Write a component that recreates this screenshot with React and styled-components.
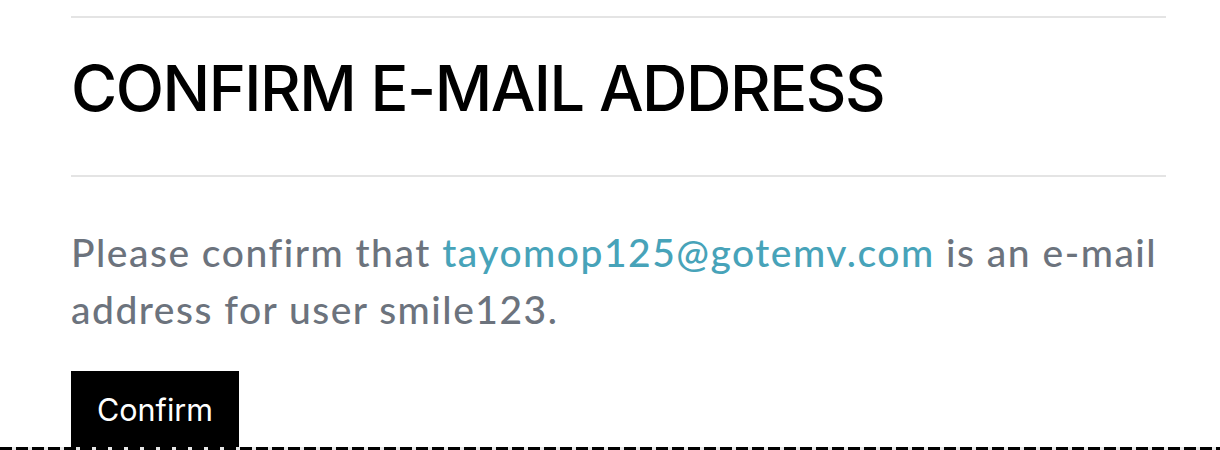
import React from 'react';
import styled, { createGlobalStyle } from 'styled-components';

const GlobalStyle = createGlobalStyle`
  html, body {
    margin: 0;
    padding: 0;
    background: #ffffff;
  }
  body {
    font-family: 'Inter', 'Liberation Sans', sans-serif;
    overflow: hidden;
  }
`;

const Page = styled.div`
  padding: 16px 54px 0 71px;
`;

const Rule = styled.hr`
  margin: 0;
  border: 0;
  height: 2px;
  background: #e4e4e4;
`;

const Title = styled.h1`
  margin: 31px 0 47px;
  font-family: 'Inter', 'Liberation Sans', sans-serif;
  font-size: 63px;
  line-height: 79px;
  font-weight: 500;
  color: #000000;
  letter-spacing: -1.5px;
`;

const Message = styled.p`
  margin: 47px 0 33px;
  font-family: 'Lato', 'Noto Sans', sans-serif;
  font-size: 39px;
  line-height: 57px;
  font-weight: 500;
  letter-spacing: 1.5px;
  color: #6c737d;
`;

const Email = styled.a`
  color: #47a3b9;
  text-decoration: none;
`;

const ConfirmButton = styled.button`
  display: block;
  border: 0;
  border-radius: 0;
  margin: 0;
  padding: 15px 26px 40px;
  background: #000000;
  color: #ffffff;
  font-family: 'Inter', 'Liberation Sans', sans-serif;
  font-size: 30.5px;
  line-height: 48px;
  cursor: pointer;
`;

const PageEdge = styled.div`
  position: fixed;
  left: 0;
  right: 0;
  top: 447px;
  height: 3px;
  background: repeating-linear-gradient(
    90deg,
    #000000 0 12px,
    #e6e6e6 12px 16px
  );
`;

export default function App() {
  return (
    <>
      <GlobalStyle />
      <Page>
        <Rule />
        <Title>CONFIRM E-MAIL ADDRESS</Title>
        <Rule />
        <Message>
          Please confirm that <Email href="mailto:tayomop125@gotemv.com">tayomop125@gotemv.com</Email> is an e-mail address for user smile123.
        </Message>
        <ConfirmButton type="submit">Confirm</ConfirmButton>
      </Page>
      <PageEdge />
    </>
  );
}
